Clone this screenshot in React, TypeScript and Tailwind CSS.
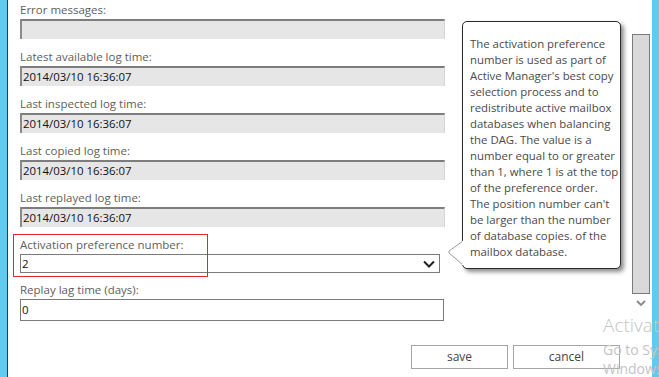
import React from "react";

function Label({ children }: { children: React.ReactNode }) {
  return <div className="h-[19px] leading-[19px] text-[11.5px] text-[#5e5e5e] whitespace-nowrap">{children}</div>;
}

function RO({ value }: { value?: string }) {
  return (
    <div className="h-[20px] w-[425px] bg-[#e6e6e6] border-t-2 border-l-2 border-t-[#7d7d7d] border-l-[#8a8a8a] border-r border-r-[#d4d4d4] text-[11.4px] leading-[18px] pl-[1px] text-[#111] whitespace-nowrap">
      {value}
    </div>
  );
}

const tip = [
  "The activation preference",
  "number is used as part of",
  "Active Manager's best copy",
  "selection process and to",
  "redistribute active mailbox",
  "databases when balancing",
  "the DAG. The value is a",
  "number equal to or greater",
  "than 1, where 1 is at the top",
  "of the preference order.",
  "The position number can't",
  "be larger than the number",
  "of database copies. of the",
  "mailbox database.",
];

export default function App() {
  return (
    <div className="relative w-[659px] h-[377px] overflow-hidden bg-white flex font-['Open_Sans','Noto_Sans',sans-serif]">
      <div className="w-[7px] h-full bg-[#5fcbee] border-r border-r-[#3a3a3a] box-content" />
      <div className="flex-1 flex flex-col pl-[12px]">
        <div className="flex flex-col gap-[8px]">
          <div>
            <Label>Error messages:</Label>
            <RO />
          </div>
          <div>
            <Label>Latest available log time:</Label>
            <RO value="2014/03/10 16:36:07" />
          </div>
          <div>
            <Label>Last inspected log time:</Label>
            <RO value="2014/03/10 16:36:07" />
          </div>
          <div>
            <Label>Last copied log time:</Label>
            <RO value="2014/03/10 16:36:07" />
          </div>
          <div>
            <Label>Last replayed log time:</Label>
            <RO value="2014/03/10 16:36:07" />
          </div>
          <div>
            <Label>Activation preference number:</Label>
            <div className="h-[19px] w-[420px] border border-[#7a7a7a] bg-white flex items-center justify-between pl-[1px] pr-[4px] text-[11.5px] text-[#111]">
              <span className="leading-[17px]">2</span>
              <svg width="12" height="8" viewBox="0 0 12 8">
                <path d="M1 1.5 L6 6.5 L11 1.5" fill="none" stroke="#222" strokeWidth="2" />
              </svg>
            </div>
          </div>
        </div>
        <div className="mt-[7px]">
          <Label>Replay lag time (days):</Label>
          <div className="h-[22px] w-[424px] border border-[#7a7a7a] bg-white pl-[1px] text-[11.5px] leading-[20px] text-[#111]">0</div>
        </div>
        <div className="mt-[24px] flex justify-end gap-[5px] pr-[5px]">
          <button className="w-[97px] h-[24px] border border-[#a5a5a5] bg-white text-[12px] text-[#444]">save</button>
          <button className="w-[107px] h-[24px] border border-[#a5a5a5] bg-white text-[12px] text-[#444]">cancel</button>
        </div>
      </div>
      <div className="w-[27px] h-full flex flex-col items-center pt-[34px] pl-[4px]">
        <div className="w-[18px] h-[260px] bg-[#d9d9d9] border border-[#7a7a7a]" />
        <svg className="mt-[6px]" width="10" height="7" viewBox="0 0 10 7">
          <path d="M1 1 L5 5 L9 1" fill="none" stroke="#888" strokeWidth="1.8" />
        </svg>
      </div>
      <div className="w-[7px] h-full bg-[#5fcbee]" />

      {/* red highlight */}
      <div className="absolute left-[13px] top-[234px] w-[195px] h-[43px] border border-[#e5262b] pointer-events-none" />

      {/* tooltip */}
      <div className="absolute left-[462px] top-[21px] w-[159px] h-[248px] bg-white border border-[#2a2a2a] rounded-[5px] shadow-[3px_3px_4px_rgba(0,0,0,0.45)] pl-[7px] pt-[14px] text-[11.4px] leading-[16px] text-[#4a4a4a] whitespace-nowrap">
        {tip.map((l, i) => (
          <div key={i}>{l}</div>
        ))}
      </div>
      <svg className="absolute left-[447px] top-[240px]" width="17" height="26" viewBox="0 0 17 26">
        <path d="M16 1 L2 11 L2 13 L16 25" fill="white" stroke="#9a9a9a" strokeWidth="1" />
        <rect x="15" y="1" width="2" height="24" fill="white" />
      </svg>

      {/* watermark */}
      <div className="absolute left-[603px] top-[316px] text-[#c4c4c4] leading-none pointer-events-none whitespace-nowrap">
        <div className="text-[19px] font-light">Activate Windows</div>
        <div className="text-[14px] mt-[8px]">Go to System</div>
        <div className="text-[14px] mt-[5px]">Windows</div>
      </div>
    </div>
  );
}
